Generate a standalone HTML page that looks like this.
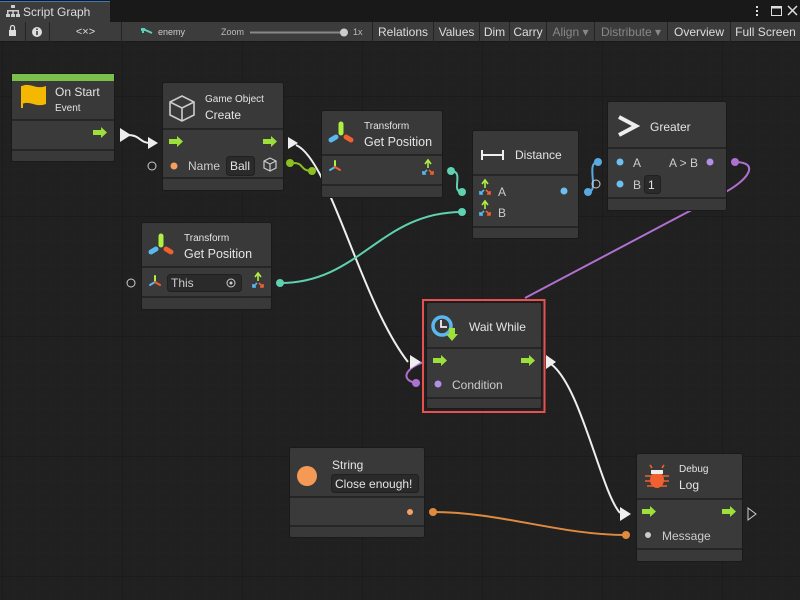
<!DOCTYPE html>
<html><head><meta charset="utf-8"><style>
*{margin:0;padding:0;box-sizing:border-box}
body{width:800px;height:600px;overflow:hidden;background:#202020;font-family:"Liberation Sans",sans-serif;position:relative}
.top{position:absolute;left:0;top:0;width:800px;height:22px;background:#191919}
.tab{position:absolute;left:0;top:1px;width:110px;height:21px;background:#3c3c3c;border-top:1px solid #3a79bb;color:#ddd;font-size:12px;padding:3px 0 0 23px}
.tb{position:absolute;left:0;top:22px;width:800px;height:20px;background:#3c3c3c;border-bottom:1px solid #191919}
.b{position:absolute;top:0;height:20px;border-left:1px solid #242424;color:#ddd;font-size:12px;line-height:20px;text-align:center}
.dis{color:#888}
svg{position:absolute;left:0;top:0}
</style></head><body>
<div class="top"><div class="tab">Script Graph</div>
<svg width="800" height="22" style="left:0;top:0"><g fill="#ccc"><rect x="11" y="5" width="4" height="3"/><rect x="7" y="10" width="12" height="1.5"/><rect x="7" y="10" width="1.5" height="6"/><rect x="12.3" y="10" width="1.5" height="6"/><rect x="17.5" y="10" width="1.5" height="6"/><rect x="6" y="14" width="4" height="3"/><rect x="11" y="14" width="4" height="3"/><rect x="16" y="14" width="4" height="3"/></g>
<g fill="#ddd"><rect x="756" y="6" width="2" height="2"/><rect x="756" y="10" width="2" height="2"/><rect x="756" y="14" width="2" height="2"/></g>
<rect x="771.5" y="6.5" width="10" height="9" fill="none" stroke="#ddd"/><rect x="771.5" y="6.5" width="10" height="2" fill="#ddd"/>
<path d="M788,6 L797,15 M797,6 L788,15" stroke="#ddd" stroke-width="1.5"/></svg></div>
<div class="tb">
<div class="b" style="left:0;width:25px;border:none"></div>
<div class="b" style="left:25px;width:24px"></div>
<div class="b" style="left:49px;width:72px;font-size:11px">&lt;×&gt;</div>
<div class="b" style="left:121px;width:251px"></div>
<div class="b" style="left:372px;width:61px">Relations</div>
<div class="b" style="left:433px;width:46px">Values</div>
<div class="b" style="left:479px;width:30px">Dim</div>
<div class="b" style="left:509px;width:37px">Carry</div>
<div class="b dis" style="left:546px;width:48px">Align ▾</div>
<div class="b dis" style="left:594px;width:73px">Distribute ▾</div>
<div class="b" style="left:667px;width:63px">Overview</div>
<div class="b" style="left:730px;width:70px">Full Screen</div>
<div style="position:absolute;left:158px;top:0;font-size:9px;color:#ccc;line-height:20px">enemy</div>
<div style="position:absolute;left:221px;top:0;font-size:9px;color:#bbb;line-height:20px">Zoom</div>
<div style="position:absolute;left:353px;top:0;font-size:9px;color:#bbb;line-height:20px">1x</div>
</div>
<svg width="800" height="42" style="top:22px"><g fill="#ddd"><rect x="9" y="8" width="7" height="6"/><path d="M10.5,8 V5.5 A2,2 0 0 1 14.5,5.5 V8" fill="none" stroke="#ddd" stroke-width="1.3"/><circle cx="37" cy="10" r="5"/></g><rect x="36.2" y="9" width="1.6" height="4" fill="#3c3c3c"/><rect x="36.2" y="6.5" width="1.6" height="1.5" fill="#3c3c3c"/>
<path d="M143,7 L152,11 M143,7 V11" stroke="#5fd0b8" stroke-width="2"/><rect x="141" y="6" width="4" height="3" fill="#5fd0b8"/>
<rect x="250" y="9.5" width="94" height="2" fill="#888"/><circle cx="344" cy="10.5" r="4" fill="#ccc"/></svg>

<svg width="800" height="600" style="top:0">
<defs>
<pattern id="mi" width="12" height="12" patternUnits="userSpaceOnUse" x="2" y="0"><path d="M0,0 H12 M0,0 V12" stroke="#232323" stroke-width="1"/></pattern>
<pattern id="ma" width="120" height="120" patternUnits="userSpaceOnUse" x="2" y="96"><path d="M0,0.5 H120 M0.5,0 V120" stroke="#1b1b1b" stroke-width="1"/></pattern>
</defs>
<rect x="0" y="43" width="800" height="557" fill="url(#mi)"/>
<rect x="0" y="43" width="800" height="557" fill="url(#ma)"/>

<g fill="none" stroke-width="2">
<path d="M128,135 C140,135 140,143 150,143" stroke="#eee"/>
<path d="M296,145 C330,160 360,300 408,362" stroke="#eee"/>
<path d="M548,362 C580,380 600,490 620,513" stroke="#eee"/>
<path d="M294,163 C304,163 300,171 312,171" stroke="#8cc020"/>
<path d="M451,171 C465,171 450,192 462,192" stroke="#5fd0b0"/>
<path d="M280,283 C360,283 380,212 462,212" stroke="#5fd0b0"/>
<path d="M598,162 C585,162 600,192 588,192" stroke="#5aa8e0"/>
<path d="M735,162 C760,162 750,180 720,195 L525,298" stroke="#b070d0"/>
<path d="M416,383 C400,380 405,368 424,362" stroke="#b070d0"/>
<path d="M433,512 C500,512 560,535 626,535" stroke="#e08a40"/>
</g>
<g fill="#eee"><path d="M120,128 L131,135 L120,142Z"/><path d="M148,137 L158,143 L148,149Z"/><path d="M288,137 L298,143 L288,149Z"/><path d="M410,355 L421,362 L410,369Z"/><path d="M546,355 L556,362 L546,369Z"/><path d="M620,507 L631,514 L620,521Z"/></g>
<path d="M748,508 L756,514 L748,520Z" fill="none" stroke="#ccc"/>
<g fill="#8cc020"><circle cx="290" cy="163" r="4"/><circle cx="312" cy="171" r="4"/></g>
<g fill="#5fd0b0"><circle cx="451" cy="171" r="4"/><circle cx="462" cy="192" r="4"/><circle cx="462" cy="212" r="4"/><circle cx="280" cy="283" r="4"/></g>
<g fill="#5aa8e0"><circle cx="598" cy="162" r="4"/><circle cx="588" cy="192" r="4"/></g>
<g fill="#b070d0"><circle cx="735" cy="162" r="4"/><circle cx="416" cy="383" r="4"/></g>
<g fill="#e08a40"><circle cx="433" cy="512" r="4"/><circle cx="626" cy="535" r="4"/></g>
<g fill="none" stroke="#ccc"><circle cx="152" cy="166" r="4"/><circle cx="131" cy="283" r="4"/><circle cx="596" cy="184" r="4"/></g>

<g stroke="#1a1a1a" stroke-width="1">
<rect x="11.5" y="73.5" width="103" height="88" rx="2" fill="#393939"/>
<rect x="162.5" y="82.5" width="121" height="108" rx="2" fill="#393939"/>
<rect x="321.5" y="110.5" width="121" height="87" rx="2" fill="#393939"/>
<rect x="472.5" y="130.5" width="106" height="108" rx="2" fill="#393939"/>
<rect x="607.5" y="101.5" width="119" height="109" rx="2" fill="#393939"/>
<rect x="141.5" y="222.5" width="130" height="87" rx="2" fill="#393939"/>
<rect x="426.5" y="302.5" width="115" height="106" rx="2" fill="#393939"/>
<rect x="289.5" y="447.5" width="135" height="90" rx="2" fill="#393939"/>
<rect x="636.5" y="453.5" width="106" height="108" rx="2" fill="#393939"/>
</g>
<rect x="423" y="300" width="121.5" height="112" fill="none" stroke="#e8514f" stroke-width="2"/>
<rect x="12" y="74" width="102" height="7" fill="#7bc04a"/>
<g fill="#3a3a3a">
<rect x="12" y="120" width="102" height="30"/><rect x="163" y="129" width="120" height="49"/><rect x="322" y="155" width="120" height="30"/>
<rect x="473" y="175" width="105" height="52"/><rect x="608" y="148" width="118" height="50"/><rect x="142" y="267" width="129" height="30"/>
<rect x="427" y="348" width="114" height="50"/><rect x="290" y="497" width="134" height="29"/><rect x="637" y="499" width="105" height="50"/>
</g>
<g stroke="#1f1f1f" stroke-width="1.5">
<path d="M12,120H114M12,150H114M163,129H283M163,178H283M322,155H442M322,185H442M473,175H578M473,227H578M608,148H726M608,198H726M142,267H271M142,297H271M427,348H541M427,398H541M290,497H424M290,526H424M637,499H742M637,549H742"/>
</g>

<path d="M22,86 C30,82 36,90 46,86 V104 C36,108 30,100 22,104Z" fill="#f5b800"/><rect x="21" y="86" width="2" height="22" fill="#f5b800"/>
<g fill="none" stroke="#ccc" stroke-width="1.6"><path d="M170,102 L182,96 L194,102 L194,115 L182,121 L170,115Z M170,102 L182,108 L194,102 M182,108 V121"/>
<path d="M264,161 L270,158 L276,161 L276,168 L270,171 L264,168Z M264,161 L270,164 L276,161 M270,164 V171" stroke-width="1.2"/>
<path d="M482,155 H503 M482,150 V160 M503,150 V160" stroke="#eee" stroke-width="2"/>
<path d="M619,117 L636,126 L619,135" stroke="#eee" stroke-width="4"/></g>
<g stroke-linecap="round"><path d="M341,124 V133" stroke="#b0f040" stroke-width="5"/><path d="M336,137 L331,140" stroke="#5ab8f0" stroke-width="5"/><path d="M346,137 L351,140" stroke="#f06030" stroke-width="5"/>
<path d="M161,236 V245" stroke="#b0f040" stroke-width="5"/><path d="M156,249 L151,252" stroke="#5ab8f0" stroke-width="5"/><path d="M166,249 L171,252" stroke="#f06030" stroke-width="5"/>
<g stroke-width="2"><path d="M335,161V166" stroke="#b0f040"/><path d="M335,167L330,170" stroke="#5ab8f0"/><path d="M335,167L340,170" stroke="#f06030"/>
<path d="M155,276V281" stroke="#b0f040"/><path d="M155,282L150,285" stroke="#5ab8f0"/><path d="M155,282L160,285" stroke="#f06030"/></g></g>
<g stroke-width="1.6" fill="none">
<g id="v3"><path d="M428,161V168" stroke="#b0f040"/><path d="M425,164L428,160L431,164" stroke="#b0f040"/><path d="M427,170L423,174M423,171V174H426" stroke="#5ab8f0"/><path d="M429,170L433,174M433,171V174H430" stroke="#f06030"/></g>
<use href="#v3" x="57" y="20"/><use href="#v3" x="57" y="41"/><use href="#v3" x="-170" y="113"/>
</g>
<circle cx="442" cy="326" r="9" fill="none" stroke="#5ab8f0" stroke-width="3.5"/><path d="M441,320V327H447" stroke="#eee" stroke-width="1.8" fill="none"/>
<path d="M452,328V334H458L452,341L446,334H452" fill="#9ee03a"/><rect x="449" y="328" width="6" height="7" fill="#9ee03a"/>
<circle cx="307" cy="476" r="10" fill="#f59a55"/>
<ellipse cx="657" cy="480" rx="7" ry="8" fill="#f06030"/><rect x="651" y="470" width="12" height="4" fill="#eee"/>
<path d="M645,476H669M645,481H669M647,486H667M652,468L650,465M662,468L664,465" stroke="#f06030" stroke-width="1.6"/>
<g fill="#9ee03a"><path id="fa" d="M93,130H101V127L107,132.5L101,138V135H93Z"/>
<use href="#fa" x="76" y="9"/><use href="#fa" x="170" y="9"/><use href="#fa" x="340" y="228"/><use href="#fa" x="428" y="228"/><use href="#fa" x="549" y="379"/><use href="#fa" x="629" y="379"/></g>
<g><circle cx="174" cy="166" r="3.5" fill="#f5a060"/><circle cx="620" cy="162" r="3.5" fill="#6ac0f0"/><circle cx="620" cy="184" r="3.5" fill="#6ac0f0"/><circle cx="710" cy="162" r="3.5" fill="#b090e8"/><circle cx="564" cy="191" r="3.5" fill="#6ac0f0"/><circle cx="438" cy="384" r="3.5" fill="#b090e8"/><circle cx="410" cy="512" r="3" fill="#f5a060"/><circle cx="648" cy="535" r="3" fill="#ccc"/></g>
<g fill="#2a2a2a" stroke="#202020"><rect x="226.5" y="156.5" width="28" height="19" rx="3"/><rect x="644.5" y="175.5" width="16" height="18" rx="3"/><rect x="167.5" y="274.5" width="74" height="17" rx="3"/><rect x="331.5" y="474.5" width="87" height="18" rx="3"/></g>
<circle cx="231" cy="283" r="4" fill="none" stroke="#ccc"/><circle cx="231" cy="283" r="1.5" fill="#ccc"/>

<g font-family="Liberation Sans, sans-serif" fill="#e4e4e4">
<text x="55" y="96" font-size="12">On Start</text><text x="55" y="111" font-size="10">Event</text>
<text x="205" y="102" font-size="10">Game Object</text><text x="205" y="119" font-size="12">Create</text>
<text x="188" y="170" font-size="12" fill="#ccc">Name</text><text x="230" y="170" font-size="12">Ball</text>
<text x="364" y="129" font-size="10">Transform</text><text x="364" y="146" font-size="12.5">Get Position</text>
<text x="515" y="159" font-size="12">Distance</text>
<text x="498" y="196" font-size="12" fill="#ccc">A</text><text x="498" y="217" font-size="12" fill="#ccc">B</text>
<text x="650" y="131" font-size="12">Greater</text>
<text x="633" y="167" font-size="12" fill="#ccc">A</text><text x="669" y="167" font-size="12" fill="#ccc">A &gt; B</text>
<text x="633" y="189" font-size="12" fill="#ccc">B</text><text x="648" y="189" font-size="12">1</text>
<text x="184" y="241" font-size="10">Transform</text><text x="184" y="258" font-size="12.5">Get Position</text>
<text x="171" y="287" font-size="12" fill="#ccc">This</text>
<text x="469" y="331" font-size="12">Wait While</text>
<text x="452" y="389" font-size="12" fill="#ccc">Condition</text>
<text x="332" y="469" font-size="12">String</text><text x="335" y="488" font-size="12">Close enough!</text>
<text x="679" y="472" font-size="10">Debug</text><text x="679" y="489" font-size="12">Log</text>
<text x="662" y="540" font-size="12" fill="#ccc">Message</text>
</g>
</svg>
</body></html>
